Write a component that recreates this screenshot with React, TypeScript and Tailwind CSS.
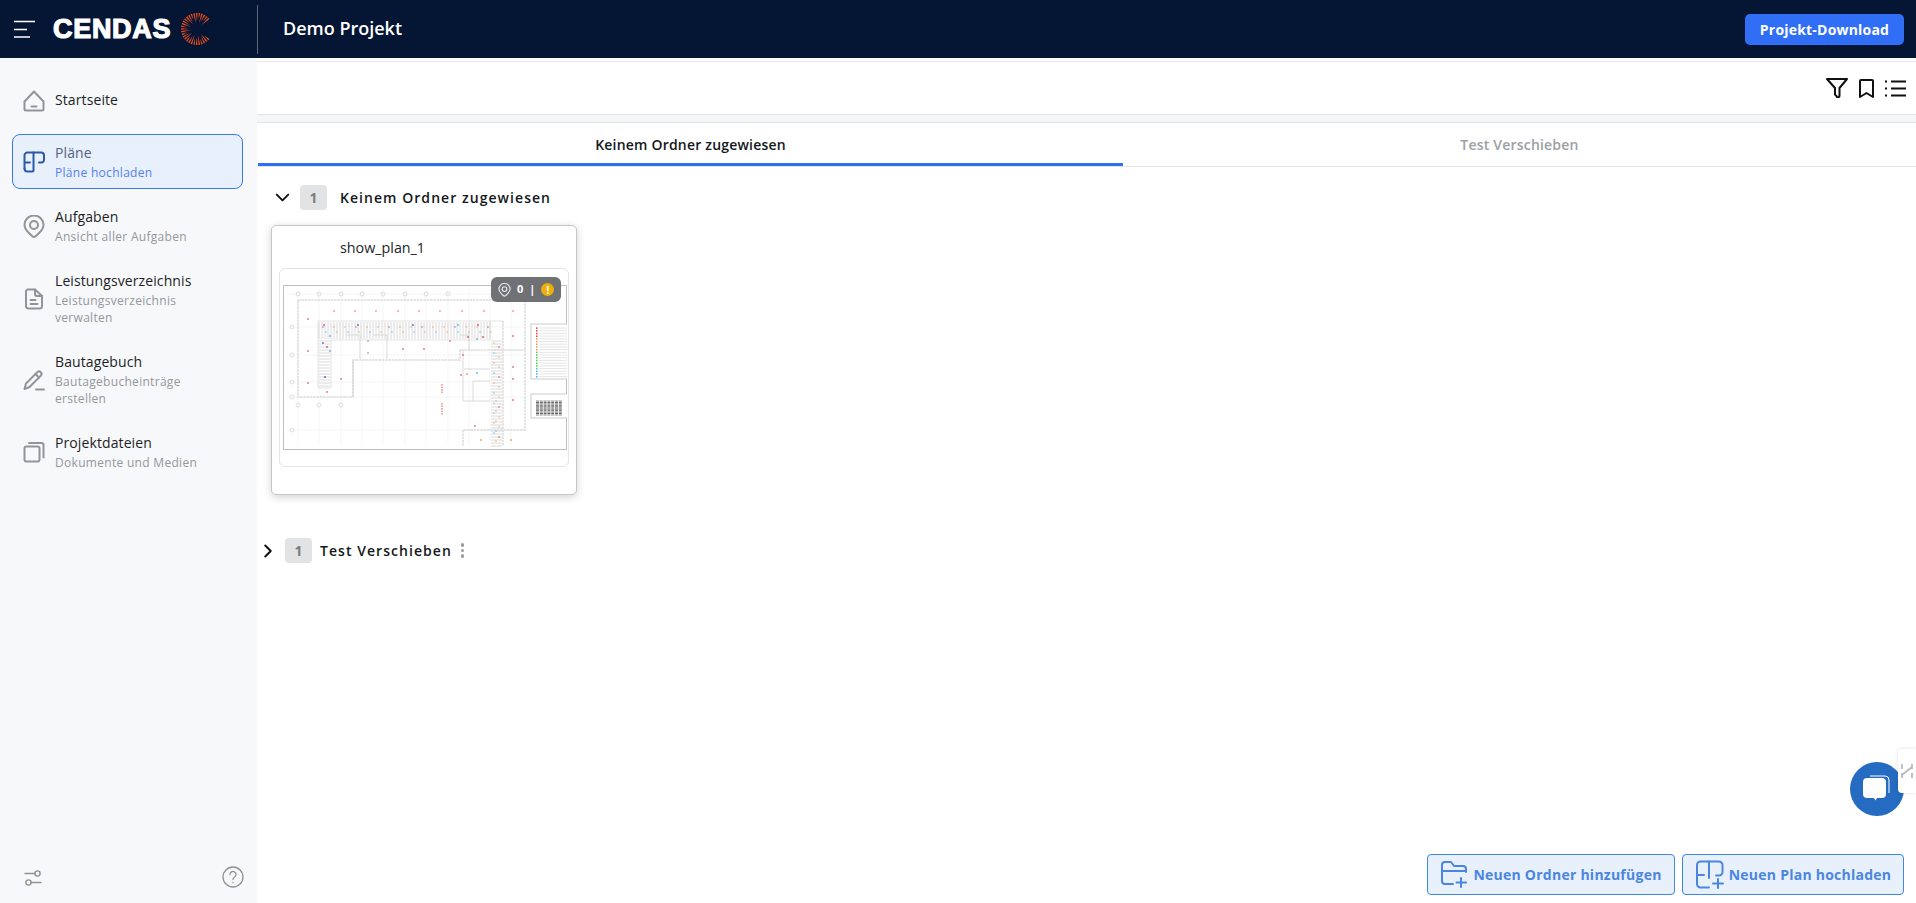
import { ReactNode } from "react";
import { ChevronDown, ChevronRight } from "lucide-react";

const iconProps = {
  fill: "none",
  stroke: "currentColor",
  strokeWidth: 2,
  strokeLinecap: "round" as const,
  strokeLinejoin: "round" as const,
};

function HomeIcon() {
  return (
    <svg width="22" height="22" viewBox="0 0 22 22" {...iconProps}>
      <path d="M11 1.500 20.500 11.500V19a1.500 1.500 0 0 1-1.500 1.500H3A1.500 1.500 0 0 1 1.500 19v-7.500Z" />
      <path d="M8.500 16.500h5" />
    </svg>
  );
}

function PlanIcon() {
  return (
    <svg width="22" height="22" viewBox="0 0 22 22" {...iconProps}>
      <path d="M7 11.500H1.500M1.500 17.500V4.500a3 3 0 0 1 3-3H18a3 3 0 0 1 3 3V9a2.500 2.500 0 0 1-2.500 2.500H16" />
      <path d="M10.500 1.500V19a1.500 1.500 0 0 1-1.500 1.500H4.500a3 3 0 0 1-3-3" />
    </svg>
  );
}

function PinIcon() {
  return (
    <svg width="22" height="23" viewBox="0 0 22 23" {...iconProps}>
      <path d="M11 22c-1 0-9.500-6.500-9.500-12a9.500 9.500 0 0 1 19 0c0 5.500-8.500 12-9.500 12Z" />
      <circle cx="11" cy="10" r="4" />
    </svg>
  );
}

function DocIcon() {
  return (
    <svg width="22" height="22" viewBox="0 0 22 22" {...iconProps}>
      <path d="M5 1.500h7l7 6.500v10a2.500 2.500 0 0 1-2.500 2.500h-11.500A2.500 2.500 0 0 1 3 18V3.500a2 2 0 0 1 2-2Z" />
      <path d="M12 1.500V6a2 2 0 0 0 2 2h5" />
      <path d="M7.500 12h5M7.500 16h7" />
    </svg>
  );
}

function PencilIcon() {
  return (
    <svg width="22" height="22" viewBox="0 0 22 22" {...iconProps}>
      <path d="M1.500 20 3 14.500 14.500 3a2.500 2.500 0 0 1 3.500 3.500L6.500 18Z" />
      <path d="M12.500 5 16 8.500M13 20.500h8" />
    </svg>
  );
}

function CopyIcon() {
  return (
    <svg width="22" height="22" viewBox="0 0 22 22" {...iconProps}>
      <rect x="1.500" y="5.500" width="15" height="15" rx="2" />
      <path d="M6 2h12.500a2 2 0 0 1 2 2v12.500" />
    </svg>
  );
}

function Sunburst() {
  const rays = Array.from({ length: 29 }, (_, i) => {
    const a = (42 + (i * 276) / 28) * (Math.PI / 180);
    const inner = i % 3 === 0 ? 6 : i % 3 === 1 ? 10 : 8;
    const spread = 0.05;
    const cx = 16;
    return [
      `${cx + Math.cos(a) * inner},${cx - Math.sin(a) * inner}`,
      `${cx + Math.cos(a - spread) * 16},${cx - Math.sin(a - spread) * 16}`,
      `${cx + Math.cos(a + spread) * 16},${cx - Math.sin(a + spread) * 16}`,
    ].join(" ");
  });
  return (
    <svg width="32" height="32" viewBox="0 0 32 32">
      {rays.map((points, i) => (
        <polygon key={i} points={points} fill="#ef4d1c" />
      ))}
    </svg>
  );
}

type NavEntry = { title: string; sub?: string[]; icon: ReactNode; active?: boolean };

const navItems: NavEntry[] = [
  { title: "Startseite", icon: <HomeIcon /> },
  { title: "Pläne", sub: ["Pläne hochladen"], icon: <PlanIcon />, active: true },
  { title: "Aufgaben", sub: ["Ansicht aller Aufgaben"], icon: <PinIcon /> },
  { title: "Leistungsverzeichnis", sub: ["Leistungsverzeichnis", "verwalten"], icon: <DocIcon /> },
  { title: "Bautagebuch", sub: ["Bautagebucheinträge", "erstellen"], icon: <PencilIcon /> },
  { title: "Projektdateien", sub: ["Dokumente und Medien"], icon: <CopyIcon /> },
];

function NavItem({ item }: { item: NavEntry }) {
  return (
    <div
      className={
        "flex min-h-[50px] items-center gap-[10px] rounded-lg border pb-[7px] pl-[10px] pt-[8px] " +
        (item.active ? "border-[#3b78f0] bg-[#e8f0fb]" : "border-transparent")
      }
    >
      <div className={"flex w-[22px] shrink-0 justify-center " + (item.active ? "text-[#2a5aa8]" : "text-[#929497]")}>
        {item.icon}
      </div>
      <div>
        <div className={"mb-px text-[14px] leading-[20px] tracking-[0.1px] " + (item.active ? "text-[#5a5f80]" : "text-[#1c1f26]")}>
          {item.title}
        </div>
        {item.sub?.map((line) => (
          <div key={line} className={"text-[12px] leading-[17px] tracking-[0.3px] " + (item.active ? "text-[#5580ee]" : "text-[#94979c]")}>
            {line}
          </div>
        ))}
      </div>
    </div>
  );
}

function Sidebar() {
  return (
    <aside className="flex w-[257px] shrink-0 flex-col bg-[#f7f8fa] pt-[17px]">
      <div className="flex flex-col gap-[9px] pl-[12px] pr-[14px]">
        {navItems.map((item) => (
          <NavItem key={item.title} item={item} />
        ))}
      </div>
      <div className="mt-auto flex items-center justify-between pb-[15px] pl-[24px] pr-[13px] text-[#8f9296]">
        <svg width="19" height="19" viewBox="0 0 19 19" {...iconProps} strokeWidth={1.400}>
          <path d="M1 5.500h10M7 14.500h10" />
          <circle cx="13.500" cy="5.500" r="2.600" />
          <circle cx="4.500" cy="14.500" r="2.600" />
        </svg>
        <svg width="22" height="22" viewBox="0 0 22 22" {...iconProps} strokeWidth={1.300}>
          <circle cx="11" cy="11" r="10" />
          <path d="M8 8.500a3 3 0 1 1 4.600 2.500c-1 .7-1.600 1.300-1.600 2.500M11 16.500v.2" />
        </svg>
      </div>
    </aside>
  );
}

function Header() {
  return (
    <header className="flex h-[58px] shrink-0 items-center bg-[#041634] pr-[12px]">
      <div className="flex w-[257px] shrink-0 items-center self-stretch pl-[14px]">
        <svg width="22" height="18" viewBox="0 0 22 18" fill="none" stroke="white" strokeWidth="1.600">
          <path d="M0 1.500h21M0 9.500h13M0 17h16" />
        </svg>
        <span className="ml-[17px] font-['Liberation_Sans',sans-serif] text-[27px] font-bold leading-none tracking-[0.7px] text-white [-webkit-text-stroke:1.200px_white]">
          CENDAS
        </span>
        <div className="ml-[10px]">
          <Sunburst />
        </div>
      </div>
      <div className="h-[49px] w-px shrink-0 bg-[#5b6678]" />
      <div className="-mt-[2px] ml-[25px] text-[18px] font-semibold text-white">Demo Projekt</div>
      <button className="ml-auto h-[31px] w-[159px] rounded-[5px] bg-[#2f6ef5] text-[14px] font-bold tracking-[0.2px] text-white">
        Projekt-Download
      </button>
    </header>
  );
}

function Toolbar() {
  return (
    <div className="flex h-[52px] shrink-0 items-center justify-end gap-[11px] pr-[10px] text-[#111]">
      <svg width="22" height="20" viewBox="0 0 22 20" {...iconProps}>
        <path d="M1 1h20l-7.500 9v7.500a1.500 1.500 0 0 1-3 .5l-1.500-1.500V10Z" />
      </svg>
      <svg width="15" height="19" viewBox="0 0 15 19" {...iconProps}>
        <path d="M1 2a1 1 0 0 1 1-1h11a1 1 0 0 1 1 1v16l-6.500-4L1 18Z" />
      </svg>
      <svg width="21" height="17" viewBox="0 0 21 17" fill="none" stroke="currentColor" strokeWidth="2">
        <path d="M6 1.500h15M6 8.500h15M6 15.500h15" />
        <path d="M0 1.500h2M0 8.500h2M0 15.500h2" />
      </svg>
    </div>
  );
}

function Tabs() {
  return (
    <div className="flex h-[45px] shrink-0 border-b border-t border-[#e3e5e8] text-[14px] font-semibold tracking-[0.2px]">
      <div className="ml-px flex w-[865px] items-center justify-center border-b-[3px] border-[#2f6ef5] pt-[3px] text-[#14171c]">
        Keinem Ordner zugewiesen
      </div>
      <div className="flex flex-1 items-center justify-center text-[#9ca0a6]">Test Verschieben</div>
    </div>
  );
}

// simplified floor plan thumbnail
function FloorPlan() {
  const xs = [15, 36, 58, 79, 100, 122, 143, 165, 186, 207, 228];
  const ys = [9, 42, 70, 97, 112, 145];
  const topDots = [51, 72, 93, 115, 136, 157, 179, 201, 230];
  const corridor = Array.from({ length: 58 }, (_, i) => 36 + i * 3);
  const sideRows = Array.from({ length: 36 }, (_, i) => 56 + i * 3);
  const corridorDots = Array.from({ length: 16 }, (_, i) => 40 + i * 11);
  const sideDots = Array.from({ length: 10 }, (_, i) => 58 + i * 10);
  const dots: [number, number, string][] = [
    [41, 40, "#e0507a"], [75, 40, "#6c5fc7"], [130, 40, "#6c5fc7"], [175, 40, "#5ab6e8"], [195, 40, "#e05060"],
    [47, 51, "#5ab6e8"], [44, 62, "#e05060"], [40, 58, "#6c5fc7"], [47, 66, "#5ab6e8"], [85, 56, "#e8a060"], [85, 68, "#e8a060"],
    [120, 64, "#ef6a6a"], [141, 64, "#ef6a6a"], [167, 56, "#ef6a6a"], [185, 52, "#e05060"], [194, 54, "#5ab6e8"], [200, 52, "#e05060"],
    [180, 70, "#ef6a6a"], [184, 89, "#e8a060"], [194, 88, "#5ab6e8"], [42, 92, "#3b5fc7"], [58, 94, "#ef6a6a"], [25, 34, "#ef6a6a"],
    [25, 66, "#ef6a6a"], [25, 98, "#ef6a6a"], [44, 107, "#ef6a6a"], [230, 51, "#ef6a6a"], [230, 82, "#ef6a6a"], [230, 94, "#ef6a6a"],
    [230, 115, "#ef6a6a"], [192, 141, "#ef6a6a"], [198, 155, "#e8a060"], [228, 155, "#e8a060"], [178, 90, "#ef6a6a"],
  ];
  return (
    <svg width="284" height="165" viewBox="0 0 284 165" className="block">
      <defs>
        <filter id="soft" x="0" y="0" width="100%" height="100%">
          <feGaussianBlur stdDeviation="0.300" />
        </filter>
      </defs>
      <rect x="0.500" y="0.500" width="283" height="164" fill="white" stroke="#bdbfc2" />
      <g filter="url(#soft)">
        {xs.map((x) => (
          <line key={x} x1={x} y1="4" x2={x} y2="160" stroke="#f0f0f0" strokeWidth="0.600" />
        ))}
        {ys.map((y) => (
          <line key={y} x1="4" y1={y} x2="246" y2={y} stroke="#f0f0f0" strokeWidth="0.600" />
        ))}
        {xs.slice(0, 8).map((x) => (
          <circle key={x} cx={x} cy="9" r="2" fill="none" stroke="#d6d6d6" strokeWidth="0.800" />
        ))}
        {xs.slice(0, 3).map((x) => (
          <circle key={x} cx={x} cy="120" r="2" fill="none" stroke="#d6d6d6" strokeWidth="0.800" />
        ))}
        {ys.slice(1).map((y) => (
          <circle key={y} cx="9" cy={y} r="2" fill="none" stroke="#d6d6d6" strokeWidth="0.800" />
        ))}
        <g fill="none" stroke="#dcdcdc">
          <path d="M15 15H242V145H180V161M15 15V112H70V75H177V65H242M220 36V161" strokeWidth="1.500" strokeDasharray="2.500 0.800" />
          <path d="M35 36H220M35 36V103H48V55H207V36" strokeWidth="0.800" />
          <path d="M70 75V112M180 65V116H207M63 50h14v24M90 50h14v24M177 50h9v15M181 84h26M190 116v-20h17" stroke="#cccccc" strokeWidth="0.700" />
        </g>
        {corridor.map((x) => (
          <line key={x} x1={x} y1="37" x2={x} y2="54" stroke="#dadada" strokeWidth="1" />
        ))}
        {sideRows.map((y) => (
          <line key={y} x1="208" y1={y} x2="219" y2={y} stroke="#dadada" strokeWidth="1" />
        ))}
        {sideRows.slice(0, 16).map((y) => (
          <line key={y} x1="36" y1={y} x2="47" y2={y} stroke="#dadada" strokeWidth="1" />
        ))}
        {corridorDots.map((x, i) => (
          <g key={x}>
            <circle cx={x} cy="42" r="0.800" fill={i % 3 ? "#eab07a" : "#b070c0"} />
            <circle cx={x + 3} cy="47" r="0.800" fill={i % 2 ? "#eab07a" : "#6cc4ee"} />
          </g>
        ))}
        {sideDots.map((y, i) => (
          <g key={y}>
            <circle cx="211" cy={y} r="0.800" fill={i % 2 ? "#6cc4ee" : "#eab07a"} />
            <circle cx="216" cy={y + 4} r="0.800" fill={i % 3 ? "#eab07a" : "#e05060"} />
            <circle cx="213" cy={y + 58} r="0.800" fill={i % 3 ? "#eab07a" : "#6cc4ee"} />
          </g>
        ))}
        {topDots.map((x) => (
          <circle key={x} cx={x} cy="26" r="0.800" fill="#ef5a5a" />
        ))}
        {dots.map(([x, y, c], i) => (
          <circle key={i} cx={x} cy={y} r="0.900" fill={c} />
        ))}
        <path d="M159 99v10M159 118v12" stroke="#ef8a8a" strokeWidth="1.500" strokeDasharray="1.500 1" />
        <rect x="248" y="39" width="40" height="55" fill="white" stroke="#b5b5b5" strokeWidth="0.700" />
        {Array.from({ length: 19 }, (_, i) => (
          <g key={i}>
            <line x1="256" y1={43 + i * 2.700} x2="284" y2={43 + i * 2.700} stroke="#d4d4d4" strokeWidth="0.600" />
            <rect x="253" y={42.300 + i * 2.700} width="1.600" height="1.600" fill={i < 4 ? "#e05060" : i < 9 ? "#e8a060" : i < 15 ? "#5fd05f" : "#5ab6e8"} />
          </g>
        ))}
        <rect x="248" y="109" width="40" height="24" fill="white" stroke="#b5b5b5" strokeWidth="0.700" />
        {Array.from({ length: 11 }, (_, i) => (
          <line key={i} x1="253" y1={116 + i * 1.400} x2="279" y2={116 + i * 1.400} stroke={i % 2 ? "#555" : "#888"} strokeWidth="1" strokeDasharray="3 0.800" />
        ))}
      </g>
    </svg>
  );
}

function PlanCard() {
  return (
    <div className="ml-[14px] flex h-[270px] w-[306px] flex-col rounded-[5px] border border-[#c4c6c9] bg-white px-[7px] pt-[10px] shadow-[0_2px_8px_rgba(0,0,0,0.18)]">
      <div className="pl-[61px] text-[14.300px] leading-[24px] text-[#1c1f26]">show_plan_1</div>
      <div className="relative mt-[8px] h-[199px] rounded-[6px] border border-[#e2e4e7] px-[3px] pt-[16px]">
        <FloorPlan />
        <div className="absolute right-[7px] top-[8px] flex h-[25px] w-[70px] items-center gap-[6px] rounded-[6px] bg-[#6f7175] pl-[7px] text-white">
          <svg width="13" height="14" viewBox="0 0 22 23" fill="none" stroke="#e5e5e5" strokeWidth="2">
            <path d="M11 22c-1 0-9.500-6.500-9.500-12a9.500 9.500 0 0 1 19 0c0 5.500-8.500 12-9.500 12Z" />
            <circle cx="11" cy="10" r="4" />
          </svg>
          <span className="text-[11px] font-bold">0</span>
          <span className="text-[11px] font-bold">|</span>
          <span className="flex h-[13px] w-[13px] items-center justify-center rounded-full bg-[#eeb008] text-[10px] font-bold leading-none">!</span>
        </div>
      </div>
    </div>
  );
}

function CountBadge() {
  return (
    <span className="flex h-[25px] w-[27px] items-center justify-center rounded-[4px] bg-[#e2e3e5] text-[14px] font-bold text-[#7a7c80]">
      1
    </span>
  );
}

function Sections() {
  return (
    <div className="flex-1 pt-[18px]">
      <div className="flex items-center pl-[14px]">
        <ChevronDown size={23} strokeWidth={2} className="text-[#111]" />
        <div className="ml-[6px]">
          <CountBadge />
        </div>
        <span className="ml-[13px] text-[14px] font-semibold tracking-[1.050px] text-[#14171c]">Keinem Ordner zugewiesen</span>
      </div>
      <div className="mt-[15px]">
        <PlanCard />
      </div>
      <div className="mt-[43px] flex items-center">
        <ChevronRight size={22} strokeWidth={2.200} className="text-[#111]" />
        <div className="ml-[6px]">
          <CountBadge />
        </div>
        <span className="ml-[8px] text-[14px] font-semibold tracking-[1.050px] text-[#14171c]">Test Verschieben</span>
        <span className="ml-[9px] flex flex-col gap-[2px]">
          <i className="h-[3.500px] w-[3.500px] rounded-full bg-[#9a9ca0]" />
          <i className="h-[3.500px] w-[3.500px] rounded-full bg-[#9a9ca0]" />
          <i className="h-[3.500px] w-[3.500px] rounded-full bg-[#9a9ca0]" />
        </span>
      </div>
    </div>
  );
}

function ActionButton({ icon, label, width }: { icon: ReactNode; label: string; width: string }) {
  return (
    <button className={"flex h-[41px] items-center justify-center gap-[5px] rounded-[4px] border border-[#3f87e5] bg-[#e8f0fb] text-[14px] font-bold tracking-[0.25px] text-[#4a86e0] " + width}>
      {icon}
      {label}
    </button>
  );
}

function ChatBubble() {
  return (
    <div className="absolute bottom-[87px] right-[12px] flex h-[54px] w-[54px] items-center justify-center rounded-full bg-[#256bc2]">
      <svg width="30" height="30" viewBox="0 0 30 30">
        <path d="M8 2h15a4 4 0 0 1 4 4v13" fill="none" stroke="white" strokeWidth="1" />
        <path d="M5 4h15a4 4 0 0 1 4 4v12a4 4 0 0 1-4 4h-5l-1.500 2.500-1.500-2.500h-7a4 4 0 0 1-4-4v-12a4 4 0 0 1 4-4Z" fill="white" />
      </svg>
    </div>
  );
}

function SideTab() {
  return (
    <div className="absolute bottom-[110px] right-0 flex h-[44px] w-[18px] items-center justify-center rounded-l-[4px] bg-white shadow-[0_0_4px_rgba(0,0,0,0.12)]">
      <svg width="14" height="16" viewBox="0 0 14 16" fill="none" stroke="#b8babd" strokeWidth="1.800">
        <path d="M2 1v5M2 10v5M12 1v5M12 10v5M2 12 12 4" />
      </svg>
    </div>
  );
}

export default function App() {
  return (
    <div className="relative flex h-[903px] w-[1916px] flex-col overflow-hidden bg-white font-['Open_Sans',sans-serif]">
      <Header />
      <div className="flex min-h-0 flex-1">
        <Sidebar />
        <main className="flex min-w-0 flex-1 flex-col pt-[3px]">
          <div className="shrink-0 border-t border-[#e3e5e8]">
            <Toolbar />
          </div>
          <div className="h-[8px] shrink-0 border-t border-[#e3e5e8] bg-[#f5f6f8]" />
          <Tabs />
          <Sections />
          <div className="flex shrink-0 justify-end gap-[7px] pb-[8px] pr-[12px]">
            <ActionButton
              width="w-[248px]"
              label="Neuen Ordner hinzufügen"
              icon={
                <svg width="28" height="27" viewBox="0 0 28 27" {...iconProps}>
                  <path d="M13 23H5a3 3 0 0 1-3-3V4a3 3 0 0 1 3-3h6l3 4h9a3 3 0 0 1 3 3v3" />
                  <path d="M2 10h24M21 17v9M16.500 21.500h9.500" />
                </svg>
              }
            />
            <ActionButton
              width="w-[222px]"
              label="Neuen Plan hochladen"
              icon={
                <svg width="29" height="29" viewBox="0 0 29 29" {...iconProps}>
                  <path d="M9 15H2V5a3.500 3.500 0 0 1 3.500-3.500H24A3.500 3.500 0 0 1 27.500 5v7a3.500 3.500 0 0 1-3.500 3.500h-3" />
                  <path d="M14 1.500V18M2 15v9a3.500 3.500 0 0 0 3.500 3.500H14M23 19v9M18 23.500h10" />
                </svg>
              }
            />
          </div>
        </main>
      </div>
      <ChatBubble />
      <SideTab />
    </div>
  );
}
